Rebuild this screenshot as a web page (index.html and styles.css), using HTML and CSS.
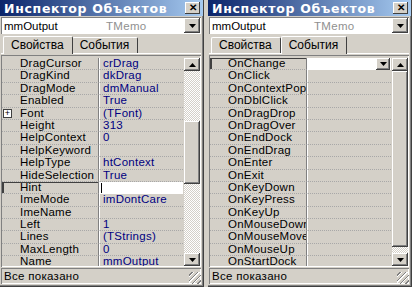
FILE: index.html
```html
<!DOCTYPE html>
<html>

<head>
    <title>Инспектор Объектов</title>
    <meta name="viewport" content="width=device-width, initial-scale=1.0">
    <link rel="stylesheet" href="styles.css">
</head>

<body>
    <div class="desk">
        <!-- Properties page -->
        <div class="inspector">
            <div class="titlebar">
                <span class="title">Инспектор Объектов</span>
                <span class="close">✕</span>
            </div>
            <div class="combo">
                <div class="combo-field"><span class="obj">mmOutput</span><span class="obj-type">TMemo</span></div>
                <div class="btn drop"><svg width="7" height="4" viewBox="0 0 7 4"><path d="M0 0h7L3.5 4z" /></svg></div>
            </div>
            <div class="tabs">
                <div class="tab active">Свойства</div>
                <div class="tab">События</div>
            </div>
            <div class="sheet">
                <div class="grid">
                    <div class="row"><div class="name">DragCursor</div><div class="value">crDrag</div></div>
                    <div class="row"><div class="name">DragKind</div><div class="value">dkDrag</div></div>
                    <div class="row"><div class="name">DragMode</div><div class="value">dmManual</div></div>
                    <div class="row"><div class="name">Enabled</div><div class="value">True</div></div>
                    <div class="row"><div class="name"><span class="plus">+</span>Font</div><div class="value">(TFont)</div></div>
                    <div class="row"><div class="name">Height</div><div class="value">313</div></div>
                    <div class="row"><div class="name">HelpContext</div><div class="value">0</div></div>
                    <div class="row"><div class="name">HelpKeyword</div><div class="value"></div></div>
                    <div class="row"><div class="name">HelpType</div><div class="value">htContext</div></div>
                    <div class="row"><div class="name">HideSelection</div><div class="value">True</div></div>
                    <div class="row selected"><div class="name">Hint</div><div class="value edit"><span class="caret"></span></div></div>
                    <div class="row"><div class="name">ImeMode</div><div class="value">imDontCare</div></div>
                    <div class="row"><div class="name">ImeName</div><div class="value"></div></div>
                    <div class="row"><div class="name">Left</div><div class="value">1</div></div>
                    <div class="row"><div class="name">Lines</div><div class="value">(TStrings)</div></div>
                    <div class="row"><div class="name">MaxLength</div><div class="value">0</div></div>
                    <div class="row"><div class="name">Name</div><div class="value">mmOutput</div></div>
                </div>
                <div class="scrollbar">
                    <div class="btn arrow"><svg width="7" height="4" viewBox="0 0 7 4"><path d="M0 4h7L3.5 0z" /></svg></div>
                    <div class="track" style="height: 50px"></div>
                    <div class="thumb" style="height: 63px"></div>
                    <div class="track fill"></div>
                    <div class="btn arrow"><svg width="7" height="4" viewBox="0 0 7 4"><path d="M0 0h7L3.5 4z" /></svg></div>
                </div>
            </div>
            <div class="status">
                <span>Все показано</span>
                <span class="grip"></span>
            </div>
        </div>

        <!-- Events page -->
        <div class="inspector">
            <div class="titlebar">
                <span class="title">Инспектор Объектов</span>
                <span class="close">✕</span>
            </div>
            <div class="combo">
                <div class="combo-field"><span class="obj">mmOutput</span><span class="obj-type">TMemo</span></div>
                <div class="btn drop"><svg width="7" height="4" viewBox="0 0 7 4"><path d="M0 0h7L3.5 4z" /></svg></div>
            </div>
            <div class="tabs">
                <div class="tab">Свойства</div>
                <div class="tab active">События</div>
            </div>
            <div class="sheet">
                <div class="grid">
                    <div class="row selected"><div class="name">OnChange</div><div class="value edit"><span class="field"></span><span class="btn mini"><svg width="7" height="4" viewBox="0 0 7 4"><path d="M0 0h7L3.5 4z" /></svg></span></div></div>
                    <div class="row"><div class="name">OnClick</div><div class="value"></div></div>
                    <div class="row"><div class="name">OnContextPopup</div><div class="value"></div></div>
                    <div class="row"><div class="name">OnDblClick</div><div class="value"></div></div>
                    <div class="row"><div class="name">OnDragDrop</div><div class="value"></div></div>
                    <div class="row"><div class="name">OnDragOver</div><div class="value"></div></div>
                    <div class="row"><div class="name">OnEndDock</div><div class="value"></div></div>
                    <div class="row"><div class="name">OnEndDrag</div><div class="value"></div></div>
                    <div class="row"><div class="name">OnEnter</div><div class="value"></div></div>
                    <div class="row"><div class="name">OnExit</div><div class="value"></div></div>
                    <div class="row"><div class="name">OnKeyDown</div><div class="value"></div></div>
                    <div class="row"><div class="name">OnKeyPress</div><div class="value"></div></div>
                    <div class="row"><div class="name">OnKeyUp</div><div class="value"></div></div>
                    <div class="row"><div class="name">OnMouseDown</div><div class="value"></div></div>
                    <div class="row"><div class="name">OnMouseMove</div><div class="value"></div></div>
                    <div class="row"><div class="name">OnMouseUp</div><div class="value"></div></div>
                    <div class="row"><div class="name">OnStartDock</div><div class="value"></div></div>
                </div>
                <div class="scrollbar">
                    <div class="btn arrow"><svg width="7" height="4" viewBox="0 0 7 4"><path d="M0 4h7L3.5 0z" /></svg></div>
                    <div class="thumb" style="height: 176px"></div>
                    <div class="track fill"></div>
                    <div class="btn arrow"><svg width="7" height="4" viewBox="0 0 7 4"><path d="M0 0h7L3.5 4z" /></svg></div>
                </div>
            </div>
            <div class="status">
                <span>Все показано</span>
                <span class="grip"></span>
            </div>
        </div>
    </div>
</body>
</html>
```

FILE: styles.css
```css
body {
    margin: 0;
    font-family: "Liberation Sans", Arial, sans-serif;
    font-size: 11.5px;
    background-color: #d4d0c8;
}

.desk {
    display: flex;
    gap: 4px;
    width: 412px;
    height: 287px;
    background-color: #d4d0c8;
}

.inspector {
    width: 204px;
    height: 287px;
    box-sizing: border-box;
    display: flex;
    flex-direction: column;
    background-color: #d4d0c8;
    border-right: 1px solid #404040;
    border-bottom: 1px solid #404040;
    box-shadow: inset -1px -1px 0 #808080;
    padding: 0 2px 2px 1px;
}

.titlebar {
    height: 16px;
    display: flex;
    align-items: center;
    justify-content: space-between;
    padding: 0 3px 0 4px;
    margin: 0 -2px 0 -1px;
    background: linear-gradient(to right, #0a246a, #a6caf0);
    color: white;
}

.title {
    font-family: "DejaVu Sans", sans-serif;
    font-weight: bold;
    font-size: 12.5px;
    letter-spacing: 0.7px;
    white-space: nowrap;
}

.close {
    width: 15px;
    height: 12px;
    line-height: 12px;
    text-align: center;
    font-size: 10px;
    font-weight: bold;
    color: black;
    background-color: #d4d0c8;
    box-shadow: inset -1px -1px 0 #404040, inset 1px 1px 0 white;
}

.combo {
    display: flex;
    height: 15px;
    margin-top: 1px;
    background-color: white;
    box-shadow: inset 1px 1px 0 #808080;
    padding: 1px;
}

.combo-field {
    flex: 1;
    display: flex;
    align-items: center;
    padding-left: 2px;
    white-space: nowrap;
}

.obj {
    width: 102px;
}

.obj-type {
    color: #909090;
    letter-spacing: 0.3px;
}

.btn {
    display: flex;
    align-items: center;
    justify-content: center;
    background-color: #d4d0c8;
    box-shadow: inset -1px -1px 0 #404040, inset 1px 1px 0 white, inset -2px -2px 0 #808080;
}

.drop {
    width: 16px;
}

.tabs {
    display: flex;
    align-items: flex-end;
    height: 18px;
    padding-left: 2px;
    margin-top: 1px;
    border-bottom: 1px solid white;
}

.tab {
    height: 15px;
    line-height: 14px;
    padding: 0 8px 0 7px;
    border-top: 1px solid white;
    border-left: 1px solid white;
    border-right: 1px solid #404040;
    border-radius: 2px 2px 0 0;
    white-space: nowrap;
    font-size: 12px;
}

.tab.active {
    height: 17px;
    line-height: 16px;
    position: relative;
    top: 1px;
    background-color: #d4d0c8;
    margin: 0 -1px 0 0;
}

.sheet {
    flex: 1;
    display: flex;
    margin-top: 1px;
    padding: 3px 1px 1px 1px;
    box-shadow: inset 1px 1px 0 #808080, inset -1px -1px 0 white;
    min-height: 0;
}

.grid {
    flex: 1;
    display: flex;
    flex-direction: column;
    overflow: hidden;
}

.row {
    height: 12.4px;
    flex: none;
    display: grid;
    grid-template-columns: 97px 1fr;
    line-height: 11.4px;
    white-space: nowrap;
    letter-spacing: 0.25px;
}

.name {
    position: relative;
    padding-left: 18px;
    overflow: hidden;
    border-bottom: 1px dotted #a8a8a8;
    border-right: 1px solid #808080;
    color: black;
}

.value {
    padding-left: 3px;
    overflow: hidden;
    border-bottom: 1px dotted #a8a8a8;
    border-left: 1px solid white;
    color: #000080;
}

.plus {
    position: absolute;
    left: 1px;
    top: 1px;
    width: 7px;
    height: 7px;
    border: 1px solid #404040;
    background-color: white;
    font-size: 9px;
    line-height: 7px;
    text-align: center;
    letter-spacing: 0;
    color: black;
}

.row.selected .name {
    box-shadow: inset 2px 0 0 #404040, inset 0 1px 0 #404040;
}

.row.selected .edit {
    background-color: white;
    display: flex;
    padding-left: 1px;
    border-bottom: none;
}

.caret {
    width: 1px;
    height: 10px;
    margin-top: 1px;
    background-color: black;
}

.field {
    flex: 1;
}

.mini {
    width: 14px;
    height: 12px;
    margin-right: 1px;
}

.scrollbar {
    width: 16px;
    display: flex;
    flex-direction: column;
    margin-left: 1px;
}

.arrow {
    height: 13px;
    flex: none;
}

.track {
    flex: none;
    background-image: repeating-conic-gradient(#ffffff 0 25%, #d4d0c8 0 50%);
    background-size: 2px 2px;
}

.track.fill {
    flex: 1;
}

.thumb {
    flex: none;
    background-color: #d4d0c8;
    box-shadow: inset -1px -1px 0 #404040, inset 1px 1px 0 white, inset -2px -2px 0 #808080;
}

.status {
    height: 16px;
    margin-top: 1px;
    display: flex;
    align-items: center;
    justify-content: space-between;
    padding-left: 3px;
    box-shadow: inset 1px 1px 0 #808080, inset -1px -1px 0 white;
    white-space: nowrap;
    letter-spacing: 0.3px;
}

.grip {
    width: 12px;
    height: 12px;
    align-self: flex-end;
    background: repeating-linear-gradient(135deg, transparent 0 2px, #808080 2px 3px, white 3px 4px);
}
```
